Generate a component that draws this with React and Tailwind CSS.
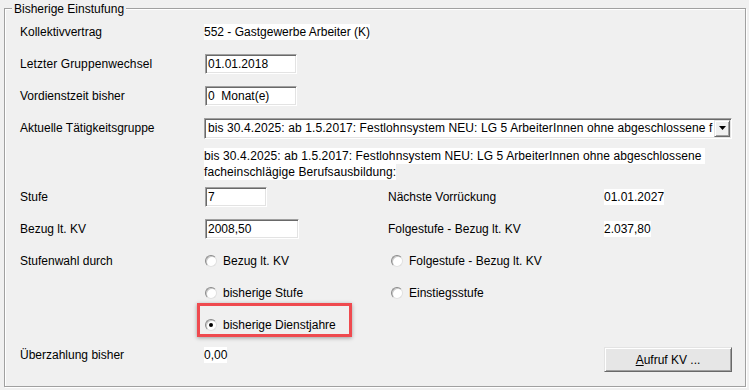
function Input({ w, children }) {
  return (
    <div
      className={`${w} h-[20px] bg-white border border-t-[#a0a0a0] border-l-[#a0a0a0] border-r-white border-b-white shadow-[inset_1px_1px_0_#696969,inset_-1px_-1px_0_#e3e3e3] pl-[2px] flex items-center whitespace-pre overflow-hidden`}
    >
      {children}
    </div>
  );
}

function Radio({ checked, label }) {
  return (
    <div className="flex items-center">
      <div className="ml-[1px] mr-[6px] w-[12px] h-[12px] rounded-full bg-white border border-t-[#8a8a8a] border-l-[#8a8a8a] border-r-[#e0e0e0] border-b-[#e0e0e0] shadow-[inset_1px_1px_0_#c8c8c8] flex items-center justify-center">
        {checked && <div className="w-[4px] h-[4px] rounded-full bg-black" />}
      </div>
      <span>{label}</span>
    </div>
  );
}

export default function App() {
  return (
    <div className="w-[749px] h-[390px] bg-[#f0f0f0] pt-[8px] pl-[4px] pr-[3px] text-[12px] leading-[16px] text-black font-['Liberation_Sans',Arial,sans-serif] overflow-hidden">
      <div className="relative h-[379px] border border-[#a0a0a0] shadow-[inset_1px_1px_0_#ffffff,1px_1px_0_#ffffff] pl-[15px] pt-[7px]">
        <div className="absolute left-[7px] top-[-8px] px-[2px] bg-[#f0f0f0]">
          Bisherige Einstufung
        </div>

        <div className="flex items-center h-[32px]">
          <div className="w-[184px] shrink-0">Kollektivvertrag</div>
          <span className="bg-white">552 - Gastgewerbe Arbeiter (K)</span>
        </div>

        <div className="flex items-center h-[32px]">
          <div className="w-[185px] shrink-0 tracking-[0.1px]">Letzter Gruppenwechsel</div>
          <Input w="w-[92px]">01.01.2018</Input>
        </div>

        <div className="flex items-center h-[32px]">
          <div className="w-[185px] shrink-0">Vordienstzeit bisher</div>
          <Input w="w-[92px]">0  Monat(e)</Input>
        </div>

        <div className="flex items-center h-[32px]">
          <div className="w-[184px] shrink-0">Aktuelle Tätigkeitsgruppe</div>
          <div className="w-[528px] h-[21px] bg-white border border-t-[#a0a0a0] border-l-[#a0a0a0] border-r-white border-b-white shadow-[inset_1px_1px_0_#696969,inset_-1px_-1px_0_#e3e3e3] flex items-center pl-[3px] pr-[1px]">
            <div className="flex-1 overflow-hidden whitespace-nowrap tracking-[0.1px]">
              bis 30.4.2025: ab 1.5.2017: Festlohnsystem NEU: LG 5 ArbeiterInnen ohne abgeschlossene f
            </div>
            <div className="w-[16px] h-[17px] shrink-0 bg-[#f0f0f0] border border-t-[#e3e3e3] border-l-[#e3e3e3] border-r-[#696969] border-b-[#696969] shadow-[inset_1px_1px_0_#ffffff,inset_-1px_-1px_0_#a0a0a0] flex items-center justify-center">
              <svg width="7" height="4" viewBox="0 0 7 4">
                <path d="M0 0H7L3.5 4Z" fill="#000" />
              </svg>
            </div>
          </div>
        </div>

        <div className="ml-[184px] mt-[4px] flex flex-col items-start tracking-[0.1px]">
          <span className="bg-white whitespace-pre">bis 30.4.2025: ab 1.5.2017: Festlohnsystem NEU: LG 5 ArbeiterInnen ohne abgeschlossene </span>
          <span className="bg-white">facheinschlägige Berufsausbildung:</span>
        </div>

        <div className="flex items-center h-[32px] mt-[1px]">
          <div className="w-[185px] shrink-0">Stufe</div>
          <div className="w-[183px] shrink-0">
            <Input w="w-[62px]">7</Input>
          </div>
          <div className="w-[216px] shrink-0">Nächste Vorrückung</div>
          <span className="bg-white">01.01.2027</span>
        </div>

        <div className="flex items-center h-[32px]">
          <div className="w-[185px] shrink-0">Bezug lt. KV</div>
          <div className="w-[183px] shrink-0">
            <Input w="w-[94px]">2008,50</Input>
          </div>
          <div className="w-[216px] shrink-0">Folgestufe - Bezug lt. KV</div>
          <span className="bg-white">2.037,80</span>
        </div>

        <div className="flex items-center h-[32px]">
          <div className="w-[184px] shrink-0">Stufenwahl durch</div>
          <div className="w-[186px] shrink-0">
            <Radio label="Bezug lt. KV" />
          </div>
          <Radio label="Folgestufe - Bezug lt. KV" />
        </div>

        <div className="flex items-center h-[32px]">
          <div className="w-[184px] shrink-0" />
          <div className="w-[186px] shrink-0">
            <Radio label="bisherige Stufe" />
          </div>
          <Radio label="Einstiegsstufe" />
        </div>

        <div className="flex items-center h-[32px]">
          <div className="w-[184px] shrink-0" />
          <div className="relative w-[186px] shrink-0">
            <Radio checked label="bisherige Dienstjahre" />
            <div className="absolute left-[-7px] top-[-14px] w-[155px] h-[34px] border-[3px] border-[#ef4a4f] shadow-[0_1px_4px_rgba(0,0,0,0.35)]" />
          </div>
        </div>

        <div className="flex items-start pt-[6px]">
          <div className="w-[184px] shrink-0">Überzahlung bisher</div>
          <span className="bg-white">0,00</span>
          <div className="ml-auto mr-[13px] w-[128px] h-[25px] bg-[#e6e6e6] border border-t-[#e3e3e3] border-l-[#e3e3e3] border-r-[#696969] border-b-[#696969] shadow-[inset_1px_1px_0_#ffffff,inset_-1px_-1px_0_#a0a0a0] flex items-center justify-center">
            <span>
              <span className="underline">A</span>ufruf KV ...
            </span>
          </div>
        </div>
      </div>
    </div>
  );
}
